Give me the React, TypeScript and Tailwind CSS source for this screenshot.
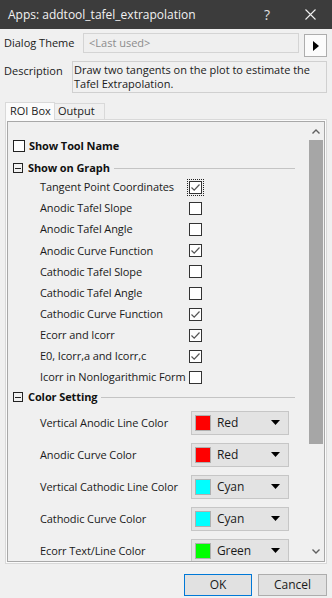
import React from "react";

interface CheckRow {
  label: string;
  checked: boolean;
  focused?: boolean;
}

interface ColorRow {
  label: string;
  name: string;
  swatch: string;
}

const checkRows: CheckRow[] = [
  { label: "Tangent Point Coordinates", checked: true, focused: true },
  { label: "Anodic Tafel Slope", checked: false },
  { label: "Anodic Tafel Angle", checked: false },
  { label: "Anodic Curve Function", checked: true },
  { label: "Cathodic Tafel Slope", checked: false },
  { label: "Cathodic Tafel Angle", checked: false },
  { label: "Cathodic Curve Function", checked: true },
  { label: "Ecorr and Icorr", checked: true },
  { label: "E0, Icorr,a and Icorr,c", checked: true },
  { label: "Icorr in Nonlogarithmic Form", checked: false },
];

const colorRows: ColorRow[] = [
  { label: "Vertical Anodic Line Color", name: "Red", swatch: "bg-[#ff0000]" },
  { label: "Anodic Curve Color", name: "Red", swatch: "bg-[#ff0000]" },
  { label: "Vertical Cathodic Line Color", name: "Cyan", swatch: "bg-[#00ffff]" },
  { label: "Cathodic Curve Color", name: "Cyan", swatch: "bg-[#00ffff]" },
  { label: "Ecorr Text/Line Color", name: "Green", swatch: "bg-[#00ff00]" },
];

const CheckBox: React.FC<{ checked: boolean; focused?: boolean }> = ({
  checked,
  focused,
}) => (
  <div
    className={`w-[13px] h-[13px] border border-[#333333] bg-white flex items-center justify-center ${
      focused ? "outline outline-1 outline-dotted outline-[#222] outline-offset-1" : ""
    }`}
  >
    {checked && (
      <svg width="11" height="11" viewBox="0 0 11 11">
        <path d="M1.5 5.5 L4.2 8.2 L9.5 2.5" fill="none" stroke="#555" strokeWidth="1.2" />
      </svg>
    )}
  </div>
);

const SectionHeader: React.FC<{ title: string; height: string }> = ({
  title,
  height,
}) => (
  <div className={`shrink-0 flex items-center pl-[5px] pr-[13px] ${height}`}>
    <div className="w-[10px] h-[10px] border border-[#222] flex items-center justify-center bg-[#f0f0f0]">
      <div className="w-[6px] h-px bg-[#222]" />
    </div>
    <span className="ml-[5px] font-bold text-[#111]">{title}</span>
    <div className="flex-1 h-px bg-[#c4c4c4] ml-[4px]" />
  </div>
);

export default function App() {
  return (
    <div
      className="w-[332px] h-[598px] bg-[#f0f0f0] overflow-hidden text-[11px] text-[#1a1a1a] flex flex-col"
      style={{ fontFamily: '"Open Sans", "Noto Sans", sans-serif' }}
    >
      {/* title bar */}
      <div className="h-[29px] shrink-0 bg-[#3c3c3c] flex items-center pl-[8px] text-[#f2f2f2] text-[12px]">
        <span>Apps: addtool_tafel_extrapolation</span>
        <span className="ml-auto mr-[35px] text-[14px] text-[#e0e0e0]">?</span>
        <svg width="11" height="11" viewBox="0 0 11 11" className="mr-[16px]">
          <path d="M0.5 0.5 L10.5 10.5 M10.5 0.5 L0.5 10.5" stroke="#f0f0f0" strokeWidth="1.1" />
        </svg>
      </div>

      {/* dialog theme */}
      <div className="flex items-start mt-[4px] h-[24px]">
        <span className="pl-[4px] w-[83px] leading-[18px] mt-[1px]">Dialog Theme</span>
        <div className="w-[216px] h-[20px] border border-[#d4d4d4] bg-[#efefef] flex items-center pl-[5px] text-[#8c8c8c]">
          &lt;Last used&gt;
        </div>
        <div className="ml-[5px] mt-[1px] w-[23px] h-[23px] border border-[#adadad] bg-[#fbfbfb] flex items-center justify-center">
          <svg width="6" height="10" viewBox="0 0 6 10">
            <path d="M0 0 L6 5 L0 10 Z" fill="#000" />
          </svg>
        </div>
      </div>

      {/* description */}
      <div className="flex items-start mt-[4px] h-[33px]">
        <span className="pl-[4px] w-[72px] mt-[2px]">Description</span>
        <div className="w-[255px] h-[32px] border border-[#d0d0d0] bg-[#f0f0f0] pl-[1px] leading-[14px] pt-px">
          Draw two tangents on the plot to estimate the
          <br />
          Tafel Extrapolation.
        </div>
      </div>

      {/* tabs */}
      <div className="flex items-end pl-[5px] mt-[7px] h-[18px]">
        <div className="h-[18px] w-[50px] border border-b-0 border-[#d9d9d9] bg-[#fbfbfb] flex items-center pl-[4px] relative z-10 -mb-px">
          ROI Box
        </div>
        <div className="h-[16px] w-[50px] border border-l-0 border-b-0 border-[#d9d9d9] bg-[#f0f0f0] flex items-center pl-[3px]">
          Output
        </div>
      </div>

      {/* tab page */}
      <div className="ml-[5px] w-[322px] h-[445px] border border-[#d9d9d9] bg-[#fbfbfb] p-px">
        <div className="w-full h-full border border-[#a8a8a8] bg-[#f0f0f0] flex overflow-hidden">
          <div className="flex-1 flex flex-col pt-[14px] tracking-[-0.1px] overflow-hidden">
            <div className="shrink-0 flex items-center h-[20px] pl-[5px]">
              <div className="w-[12px] h-[12px] border border-[#222] bg-white" />
              <span className="ml-[4px] font-bold text-[#111]">Show Tool Name</span>
            </div>
            <div className="shrink-0 h-[3px]" />
            <SectionHeader title="Show on Graph" height="h-[18px]" />
            {checkRows.map((r) => (
              <div key={r.label} className="shrink-0 flex items-center h-[21.1px] pl-[32px]">
                <span className="w-[149px]">{r.label}</span>
                <CheckBox checked={r.checked} focused={r.focused} />
              </div>
            ))}
            <SectionHeader title="Color Setting" height="h-[19px]" />
            {colorRows.map((r) => (
              <div key={r.label} className="shrink-0 flex items-center h-[32px] pl-[32px]">
                <span className="w-[151px]">{r.label}</span>
                <div className="w-[98px] h-[24px] border border-[#c6c6c6] bg-[#e3e3e3] flex items-center pl-[3px] pr-[8px]">
                  <div className={`w-[16px] h-[16px] ${r.swatch} border border-[#b0b0b0]`} />
                  <span className="ml-[6px] text-[12px]">{r.name}</span>
                  <svg width="9" height="5" viewBox="0 0 9 5" className="ml-auto">
                    <path d="M0 0 L9 0 L4.5 5 Z" fill="#000" />
                  </svg>
                </div>
              </div>
            ))}
          </div>

          {/* scrollbar */}
          <div className="w-[16px] flex flex-col items-center">
            <div className="h-[17px] flex items-center justify-center mt-[1px]">
              <svg width="8" height="5" viewBox="0 0 8 5">
                <path d="M0.5 4.5 L4 1 L7.5 4.5" fill="none" stroke="#606060" strokeWidth="1.4" />
              </svg>
            </div>
            <div className="w-[14px] h-[304px] bg-[#a6a6a6]" />
            <div className="flex-1" />
            <div className="h-[17px] flex items-center justify-center mb-[1px]">
              <svg width="8" height="5" viewBox="0 0 8 5">
                <path d="M0.5 0.5 L4 4 L7.5 0.5" fill="none" stroke="#606060" strokeWidth="1.4" />
              </svg>
            </div>
          </div>
        </div>
      </div>

      {/* buttons */}
      <div className="flex justify-end gap-[6px] pr-[5px] mt-[10px]">
        <div className="w-[68px] h-[22px] border border-[#0078d7] bg-[#e1e1e1] flex items-center justify-center text-[12px]">
          OK
        </div>
        <div className="w-[69px] h-[22px] border border-[#adadad] bg-[#e1e1e1] flex items-center justify-center text-[12px]">
          Cancel
        </div>
      </div>
    </div>
  );
}
